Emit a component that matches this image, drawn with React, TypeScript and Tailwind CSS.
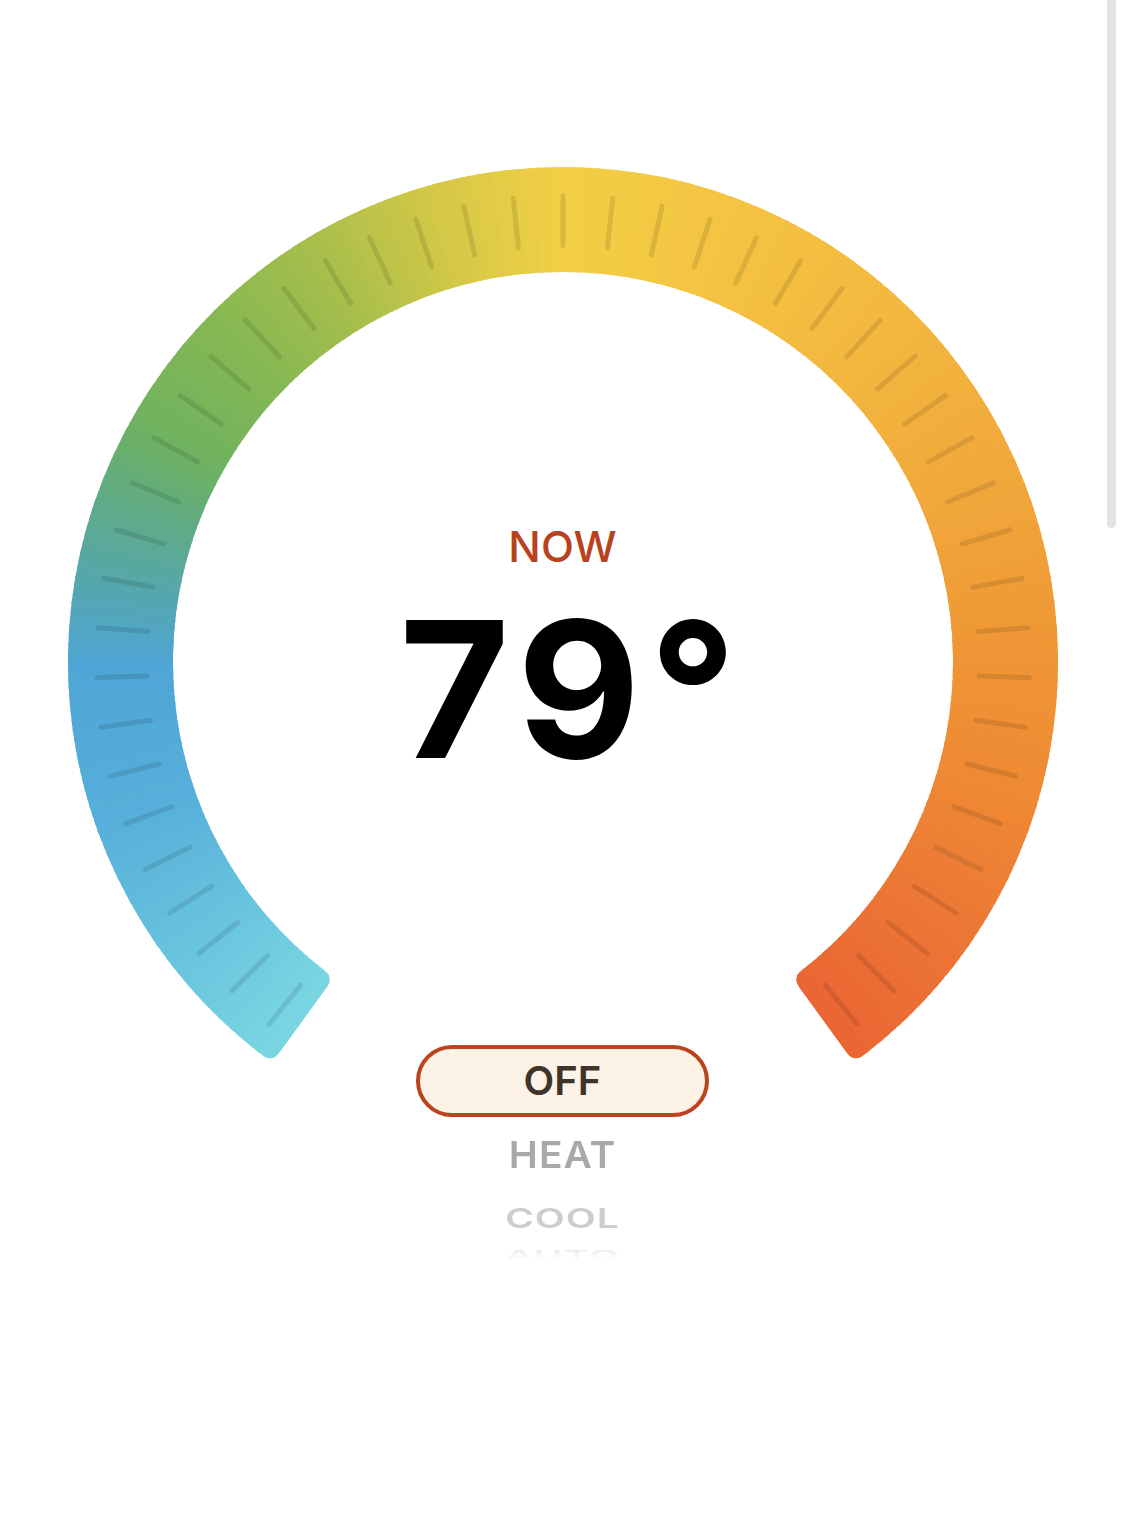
import React from 'react';

const CX = 495;
const CY = 495;
const R_OUT = 495;
const R_IN = 390;
const START = -144;
const END = 144;
const TICKS = 47;

// gradient stops along the dial, degrees clockwise from 12 o'clock
const stops: [number, string][] = [
  [-146, '#7bd9e2'],
  [-125, '#66c2dd'],
  [-110, '#57b0da'],
  [-90, '#4fa5d5'],
  [-80, '#55a7ac'],
  [-70, '#5fab85'],
  [-60, '#70b25f'],
  [-45, '#86b852'],
  [-30, '#a9bf4b'],
  [-15, '#d4c847'],
  [0, '#f2cf45'],
  [20, '#f4c442'],
  [45, '#f3b73f'],
  [70, '#f0a63a'],
  [90, '#ef9535'],
  [105, '#ee8a34'],
  [125, '#ec7635'],
  [146, '#ea6434'],
];

const hex = (h: string) => [1, 3, 5].map((i) => parseInt(h.slice(i, i + 2), 16));

function colorAt(deg: number) {
  for (let i = 0; i < stops.length - 1; i++) {
    const [a, ca] = stops[i];
    const [b, cb] = stops[i + 1];
    if (deg >= a && deg <= b) {
      const t = (deg - a) / (b - a);
      const x = hex(ca);
      const y = hex(cb);
      const c = x.map((v, k) => Math.round(v + (y[k] - v) * t));
      return `rgb(${c[0]},${c[1]},${c[2]})`;
    }
  }
  return deg < 0 ? stops[0][1] : stops[stops.length - 1][1];
}

const pt = (r: number, deg: number) => {
  const a = (deg * Math.PI) / 180;
  return [CX + r * Math.sin(a), CY - r * Math.cos(a)];
};
const p = (r: number, deg: number) => pt(r, deg).map((v) => v.toFixed(2)).join(' ');

// annular sector with softened corners
function bandPath() {
  const rho = 12;
  const dOut = (rho / R_OUT) * (180 / Math.PI);
  const dIn = (rho / R_IN) * (180 / Math.PI);
  return [
    `M ${p(R_OUT, START + dOut)}`,
    `A ${R_OUT} ${R_OUT} 0 1 1 ${p(R_OUT, END - dOut)}`,
    `Q ${p(R_OUT, END)} ${p(R_OUT - rho, END)}`,
    `L ${p(R_IN + rho, END)}`,
    `Q ${p(R_IN, END)} ${p(R_IN, END - dIn)}`,
    `A ${R_IN} ${R_IN} 0 1 0 ${p(R_IN, START + dIn)}`,
    `Q ${p(R_IN, START)} ${p(R_IN + rho, START)}`,
    `L ${p(R_OUT - rho, START)}`,
    `Q ${p(R_OUT, START)} ${p(R_OUT, START + dOut)}`,
    'Z',
  ].join(' ');
}

function Gauge() {
  const wedges = [];
  for (let d = START - 2; d < END + 2; d += 1) {
    wedges.push(
      <polygon
        key={d}
        points={`${CX},${CY} ${p(R_OUT + 10, d - 0.3)} ${p(R_OUT + 10, d + 1.3)}`}
        fill={colorAt(d + 0.5)}
      />
    );
  }
  const step = (END - START) / TICKS;
  const ticks = Array.from({ length: TICKS }, (_, i) => {
    const deg = START + (i + 0.5) * step;
    const [x1, y1] = pt(416.5, deg);
    const [x2, y2] = pt(466.5, deg);
    return <line key={i} x1={x1} y1={y1} x2={x2} y2={y2} />;
  });

  return (
    <div className="relative h-[990px] w-[990px]">
      <svg width="990" height="990" viewBox="0 0 990 990" className="block">
        <defs>
          <clipPath id="band">
            <path d={bandPath()} />
          </clipPath>
        </defs>
        <g clipPath="url(#band)">{wedges}</g>
        <g stroke="rgba(0,0,0,0.1)" strokeWidth="5" strokeLinecap="round">
          {ticks}
        </g>
      </svg>

      {/* current reading */}
      <div className="absolute inset-x-0 top-[358px] flex flex-col items-center">
        <span className="text-[43px] font-medium leading-none text-[#b9411d]">NOW</span>
        <span className="mt-[26px] pl-[20px] text-[190px] font-bold leading-none tracking-[9px] text-black">
          79°
        </span>
      </div>
    </div>
  );
}

function ModePicker() {
  return (
    <div className="-mt-[112px] flex flex-col items-center">
      <div className="flex h-[72px] w-[293px] items-center justify-center rounded-full border-[4.5px] border-[#bb431d] bg-[#fdf2e6]">
        <span className="text-[40px] font-semibold leading-none text-[#3e3429]">OFF</span>
      </div>
      <div className="flex h-[74px] items-center">
        <span className="scale-y-[0.96] text-[39px] font-semibold leading-none tracking-[1px] text-[#a9a9a9]">
          HEAT
        </span>
      </div>
      <div className="flex h-[52px] items-center">
        <span className="scale-y-[0.7] text-[39px] font-semibold leading-none tracking-[1px] text-[#cdcdcd]">
          COOL
        </span>
      </div>
      <div className="flex h-[34px] items-center">
        <span className="-translate-y-[6px] scale-y-[0.35] bg-gradient-to-b from-[#e4e4e4] via-[#f6f6f6] to-white bg-clip-text text-[39px] font-semibold leading-none tracking-[1px] text-transparent">
          AUTO
        </span>
      </div>
    </div>
  );
}

export default function App() {
  return (
    <div className="relative h-[1535px] w-full overflow-hidden bg-white font-['Inter',sans-serif]">
      <div className="flex flex-col items-center pt-[167px]">
        <Gauge />
        <ModePicker />
      </div>
      {/* scroll indicator */}
      <div className="absolute right-[9px] top-0 h-[528px] w-[9px] rounded-b-full bg-[#e3e3e3]" />
    </div>
  );
}
